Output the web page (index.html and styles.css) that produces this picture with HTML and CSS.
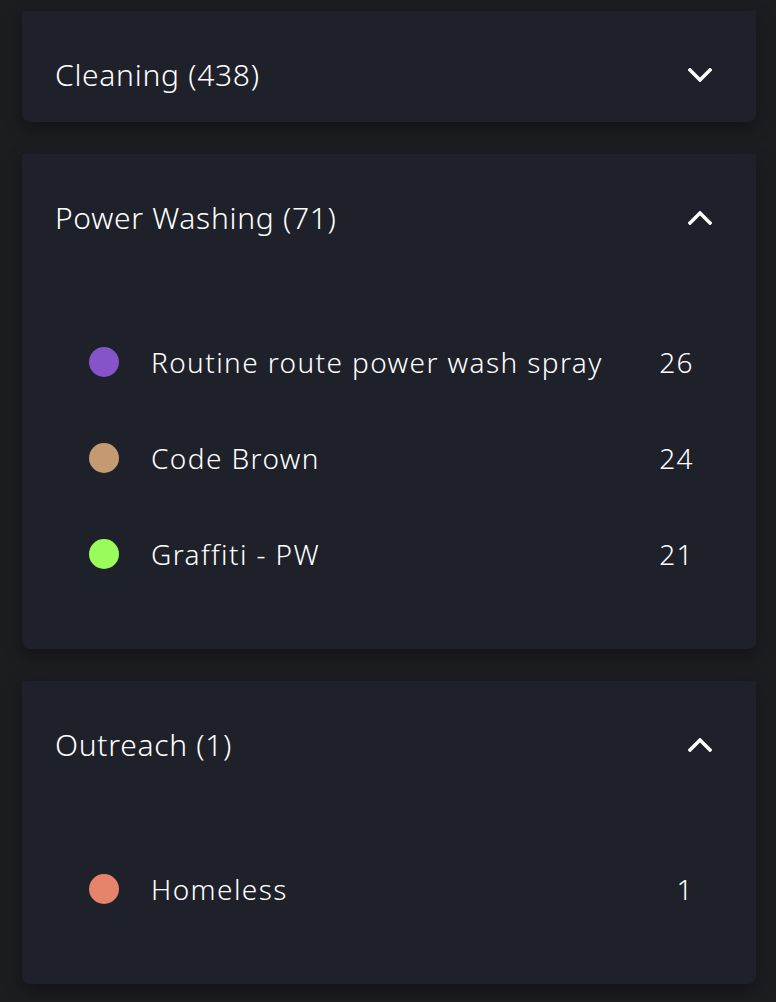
FILE: index.html
```html
<!DOCTYPE html>
<html lang="en">
<head>
    <meta charset="UTF-8">
    <meta name="viewport" content="width=device-width, initial-scale=1.0">
    <title>Categories</title>
    <link rel="stylesheet" href="styles.css">
</head>
<body>
    <main class="categories">
        <section class="category">
            <header class="category-header">
                <h2>Cleaning (438)</h2>
                <svg class="chevron" viewBox="0 0 24 14" width="24" height="14"><polyline points="2,2 12,12 22,2"/></svg>
            </header>
        </section>

        <section class="category">
            <header class="category-header">
                <h2>Power Washing (71)</h2>
                <svg class="chevron" viewBox="0 0 24 14" width="24" height="14"><polyline points="2,12 12,2 22,12"/></svg>
            </header>
            <ul class="category-list">
                <li class="category-item">
                    <span class="dot dot-purple"></span>
                    <span class="item-name">Routine route power wash spray</span>
                    <span class="item-count">26</span>
                </li>
                <li class="category-item">
                    <span class="dot dot-tan"></span>
                    <span class="item-name">Code Brown</span>
                    <span class="item-count">24</span>
                </li>
                <li class="category-item">
                    <span class="dot dot-green"></span>
                    <span class="item-name">Graffiti - PW</span>
                    <span class="item-count">21</span>
                </li>
            </ul>
        </section>

        <section class="category">
            <header class="category-header">
                <h2>Outreach (1)</h2>
                <svg class="chevron" viewBox="0 0 24 14" width="24" height="14"><polyline points="2,12 12,2 22,12"/></svg>
            </header>
            <ul class="category-list">
                <li class="category-item">
                    <span class="dot dot-salmon"></span>
                    <span class="item-name">Homeless</span>
                    <span class="item-count">1</span>
                </li>
            </ul>
        </section>
    </main>
</body>
</html>
```

FILE: styles.css
```css
html {
  box-sizing: border-box;
  font-family: "Noto Sans", Lato, sans-serif;
  font-size: 16px;
}

*,
*:before,
*:after {
  box-sizing: inherit;
}

body {
  margin: 0;
  background-color: #1b1d21;
  color: #fff;
}

.categories {
  display: flex;
  flex-direction: column;
  gap: 32px;
  padding: 11px 20px 16px 22px;
}

.category {
  background-color: #1f212a;
  border-radius: 0 0 8px 8px;
  box-shadow: 0 6px 16px rgba(0, 0, 0, 0.35);
}

.category-header {
  display: flex;
  justify-content: space-between;
  align-items: center;
  padding: 47px 44px 30px 33px;
}

.category-header h2 {
  margin: 0;
  font-size: 30px;
  font-weight: 300;
  line-height: 34px;
  letter-spacing: 0.7px;
  font-variant-ligatures: none;
}

.chevron {
  fill: none;
  stroke: #fff;
  stroke-width: 3.5;
  stroke-linecap: square;
}

.category-list {
  list-style: none;
  margin: 0;
  padding: 49px 64px 47px 67px;
}

.category-item {
  display: flex;
  align-items: center;
  height: 96px;
  font-size: 28px;
  font-weight: 300;
  letter-spacing: 1.4px;
  font-variant-ligatures: none;
}

.dot {
  width: 30px;
  height: 30px;
  border-radius: 50%;
  margin-right: 32px;
  flex-shrink: 0;
}

.dot-purple { background-color: #8454c8; }
.dot-tan { background-color: #c39a72; }
.dot-green { background-color: #9afc5a; }
.dot-salmon { background-color: #e5846a; }

.item-name {
  flex: 1;
}

.item-count {
  text-align: right;
  margin-right: -2px;
}
```
